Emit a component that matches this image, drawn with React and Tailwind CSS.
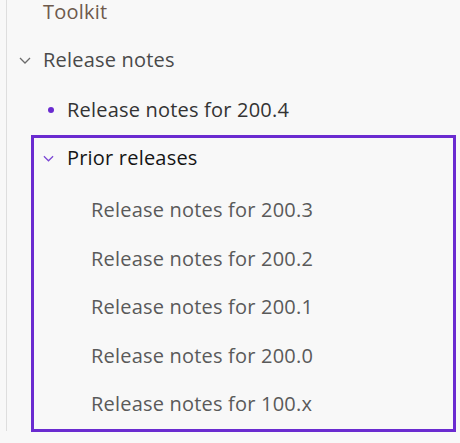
import React from "react";

const Chevron = ({ className }) => (
  <svg viewBox="0 0 12 7" className={className} fill="none" stroke="currentColor" strokeWidth="1.3">
    <path d="M1 1 L6 6 L11 1" />
  </svg>
);

export default function App() {
  const subs = ["200.3", "200.2", "200.1", "200.0", "100.x"];
  return (
    <div className="w-[460px] h-[443px] overflow-hidden bg-[#f8f8f8] tracking-[0.2px]" style={{ fontFamily: "'Open Sans', sans-serif" }}>
      <div className="ml-[6px] h-full border-l border-[#dedede] -mt-[12px] pt-0">
        <div className="h-[48px] flex items-center pl-[36px] text-[20px] text-[#6e5a4c]">Toolkit</div>
        <div className="h-[48px] flex items-center text-[20px] text-[#4a4a4a]">
          <Chevron className="w-[12px] h-[7px] ml-[12px] mr-[12px] text-[#6b6b6b]" />
          <span>Release notes</span>
        </div>
        <div className="h-[51px] flex items-center text-[20px] font-medium text-[#333]">
          <span className="ml-[41px] mr-[13px] w-[6px] h-[6px] rounded-full bg-[#6a2bd0]" />
          <span>Release notes for 200.4</span>
        </div>
        <div className="ml-[24px] mr-[4px] border-[3px] border-[#6a2bd0]">
          <div className="h-[40px] flex items-center text-[20px] text-[#151515]">
            <Chevron className="w-[11px] h-[7px] ml-[9px] mr-[13px] text-[#7a45d4]" />
            <span>Prior releases</span>
          </div>
          <div className="h-[8px]" />
          {subs.map((s) => (
            <div key={s} className="h-[48.5px] flex items-center pl-[57px] text-[20px] text-[#5a5a5a]">
              Release notes for {s}
            </div>
          ))}
        </div>
      </div>
    </div>
  );
}
